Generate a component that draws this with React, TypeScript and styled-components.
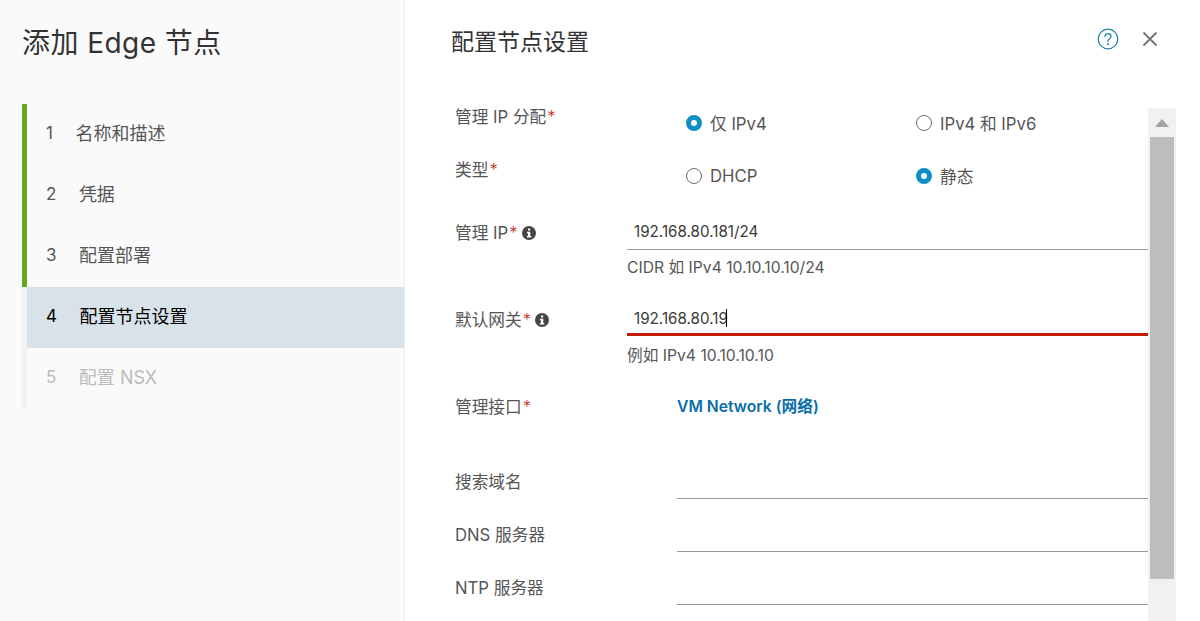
import styled, { createGlobalStyle } from 'styled-components';

const GlobalStyle = createGlobalStyle`
    html, body {
        margin: 0;
        padding: 0;
        background: #FFFFFF;
        font-family: Inter, "Noto Sans CJK SC", sans-serif;
    }
`

const Page = styled.div`
    display: flex;
    width: 1200px;
    height: 621px;
    overflow: hidden;
`

const Sidebar = styled.aside`
    box-sizing: border-box;
    width: 405px;
    flex-shrink: 0;
    padding: 23px 0 0 22px;
    background-color: #FAFAFA;
    border-right: 1px solid #EEEEEE;
`

const WizardTitle = styled.h1`
    margin: 0 0 40px;
    height: 41px;
    font-size: 28px;
    line-height: 41px;
    font-weight: 400;
    letter-spacing: 0.45px;
    color: #333333;
`

const StepList = styled.div`
    display: flex;
    flex-direction: column;
`

type StepState = 'done' | 'active' | 'disabled'

const Step = styled.div<{ $state: StepState }>`
    display: flex;
    align-items: center;
    height: 61px;
    box-sizing: border-box;
    padding: 0 0 6px 19px;
    font-size: 18px;
    border-left: 5px solid ${p => p.$state === 'done' ? '#64A81E' : '#F2F2F2'};
    background-color: ${p => p.$state === 'active' ? '#D8E3E9' : 'transparent'};
    color: ${p => p.$state === 'active' ? '#000000' : p.$state === 'disabled' ? '#BBBBBB' : '#565656'};
`

const StepNumber = styled.span`
    margin: 2px 22.5px 0 0;
    font-size: 17px;
`

const Main = styled.main`
    flex: 1;
    display: flex;
    flex-direction: column;
    min-width: 0;
`

const Header = styled.header`
    display: flex;
    align-items: flex-start;
    height: 108px;
    box-sizing: border-box;
    padding: 25px 42px 0 46px;
`

const PanelTitle = styled.h2`
    flex: 1;
    margin: 0;
    font-size: 23px;
    line-height: 34px;
    font-weight: 400;
    color: #333333;
`

const HeaderIcons = styled.div`
    display: flex;
    align-items: center;
    gap: 23px;
    margin-top: 3px;
`

const Body = styled.div`
    display: flex;
    flex: 1;
    min-height: 0;
    padding-right: 24px;
`

const Form = styled.form`
    flex: 1;
    margin-top: -2px;
    padding: 0 0 0 50px;
    overflow: hidden;
`

const Row = styled.div<{ $height: number }>`
    display: grid;
    grid-template-columns: 172px 1fr;
    height: ${p => p.$height}px;
`

const Label = styled.div`
    display: flex;
    align-items: center;
    align-self: start;
    height: 22px;
    font-size: 16.7px;
    line-height: 22px;
    color: #565656;
    white-space: pre;
`

const Required = styled.span`
    margin-left: 1px;
    font-weight: 300;
    color: #C0301A;
`

const InfoIcon = styled.svg`
    margin-left: 4px;
    width: 14px;
    height: 14px;
    fill: #454545;
`

const RadioGroup = styled.div`
    display: flex;
    padding: 6px 0 0 59px;
`

const RadioOption = styled.div`
    display: flex;
    align-items: center;
    width: 230px;
    height: 22px;
    font-size: 16.7px;
    color: #565656;
`

const RadioDot = styled.span<{ $checked?: boolean }>`
    box-sizing: border-box;
    width: 16px;
    height: 16px;
    margin-right: 8px;
    border-radius: 50%;
    background: #FFFFFF;
    border: ${p => p.$checked ? '5px solid #0F8FC7' : '1px solid #6E6E6E'};
`

const FieldColumn = styled.div<{ $inset?: boolean }>`
    display: flex;
    flex-direction: column;
    padding-left: ${p => p.$inset ? '50px' : '0'};
`

const Field = styled.div<{ $error?: boolean }>`
    box-sizing: border-box;
    height: ${p => p.$error ? '27px' : '28px'};
    padding: 0 0 0 7px;
    margin-bottom: ${p => p.$error ? '2px' : '0'};
    font-size: 15.2px;
    line-height: 20px;
    color: #3A3A3A;
    border-bottom: ${p => p.$error ? '3px solid #C21D00' : '1px solid #9A9A9A'};
`

const Caret = styled.span`
    position: relative;
    &::after {
        content: "";
        position: absolute;
        left: -2px;
        top: 0;
        width: 1px;
        height: 18px;
        background: #000000;
    }
`

const Helper = styled.div`
    margin-top: 8px;
    font-size: 15.7px;
    line-height: 20px;
    color: #565656;
`

const NetworkLink = styled.a`
    padding-left: 50px;
    font-size: 15.7px;
    line-height: 22px;
    font-weight: 600;
    color: #0A6EA8;
`

const Scrollbar = styled.div`
    display: flex;
    flex-direction: column;
    align-items: center;
    width: 28px;
    flex-shrink: 0;
    background: #F1F1F1;
`

const ScrollArrow = styled.div`
    display: flex;
    align-items: center;
    justify-content: center;
    height: 29px;
`

const ScrollThumb = styled.div`
    width: 24px;
    height: 442px;
    background: #BDBDBD;
`

function Info() {
    return (
        <InfoIcon viewBox="0 0 14 14">
            <path fillRule="evenodd" d="M7 0a7 7 0 1 1 0 14A7 7 0 0 1 7 0zM6 2.4v2.2h2.2V2.4zM4.9 5.8v1.5h1V10h-1v1.5h4.4V10h-1V5.8z" />
        </InfoIcon>
    )
}

const steps: { label: string; state: StepState }[] = [
    { label: '名称和描述', state: 'done' },
    { label: '凭据', state: 'done' },
    { label: '配置部署', state: 'done' },
    { label: '配置节点设置', state: 'active' },
    { label: '配置 NSX', state: 'disabled' },
]

export default function App() {
    return (
        <Page>
            <GlobalStyle />
            <Sidebar>
                <WizardTitle>添加 Edge 节点</WizardTitle>
                <StepList>
                    {steps.map((step, i) => (
                        <Step key={step.label} $state={step.state}>
                            <StepNumber>{i + 1}</StepNumber>
                            {step.label}
                        </Step>
                    ))}
                </StepList>
            </Sidebar>
            <Main>
                <Header>
                    <PanelTitle>配置节点设置</PanelTitle>
                    <HeaderIcons>
                        <svg width="22" height="22" viewBox="0 0 22 22" fill="none" stroke="#1B7FA8" strokeWidth="1.2" strokeLinecap="round">
                            <circle cx="11" cy="11" r="9.8" />
                            <path d="M8 8.6c0-1.8 1.4-2.9 3-2.9s3 1 3 2.7c0 2.4-3 2.4-3 4.9" />
                            <path d="M11 16v.4" strokeWidth="1.8" />
                        </svg>
                        <svg width="16" height="16" viewBox="0 0 16 16" fill="none" stroke="#737373" strokeWidth="1.8">
                            <path d="M1.5 1.5l13 13M14.5 1.5l-13 13" />
                        </svg>
                    </HeaderIcons>
                </Header>
                <Body>
                    <Form>
                        <Row $height={53}>
                            <Label>管理 IP 分配<Required>*</Required></Label>
                            <RadioGroup>
                                <RadioOption><RadioDot $checked />仅 IPv4</RadioOption>
                                <RadioOption><RadioDot />IPv4 和 IPv6</RadioOption>
                            </RadioGroup>
                        </Row>
                        <Row $height={63}>
                            <Label>类型<Required>*</Required></Label>
                            <RadioGroup>
                                <RadioOption><RadioDot />DHCP</RadioOption>
                                <RadioOption><RadioDot $checked />静态</RadioOption>
                            </RadioGroup>
                        </Row>
                        <Row $height={87}>
                            <Label>管理 IP<Required>*</Required><Info /></Label>
                            <FieldColumn>
                                <Field>192.168.80.181/24</Field>
                                <Helper>CIDR 如 IPv4 10.10.10.10/24</Helper>
                            </FieldColumn>
                        </Row>
                        <Row $height={87}>
                            <Label>默认网关<Required>*</Required><Info /></Label>
                            <FieldColumn>
                                <Field $error>192.168.80.19<Caret /></Field>
                                <Helper>例如 IPv4 10.10.10.10</Helper>
                            </FieldColumn>
                        </Row>
                        <Row $height={75}>
                            <Label>管理接口<Required>*</Required></Label>
                            <NetworkLink>VM Network (网络)</NetworkLink>
                        </Row>
                        <Row $height={53}>
                            <Label>搜索域名</Label>
                            <FieldColumn $inset><Field /></FieldColumn>
                        </Row>
                        <Row $height={53}>
                            <Label>DNS 服务器</Label>
                            <FieldColumn $inset><Field /></FieldColumn>
                        </Row>
                        <Row $height={53}>
                            <Label>NTP 服务器</Label>
                            <FieldColumn $inset><Field /></FieldColumn>
                        </Row>
                    </Form>
                    <Scrollbar>
                        <ScrollArrow>
                            <svg width="14" height="8" viewBox="0 0 14 8"><path d="M7 0l7 8H0z" fill="#A3A3A3" /></svg>
                        </ScrollArrow>
                        <ScrollThumb />
                    </Scrollbar>
                </Body>
            </Main>
        </Page>
    )
}
